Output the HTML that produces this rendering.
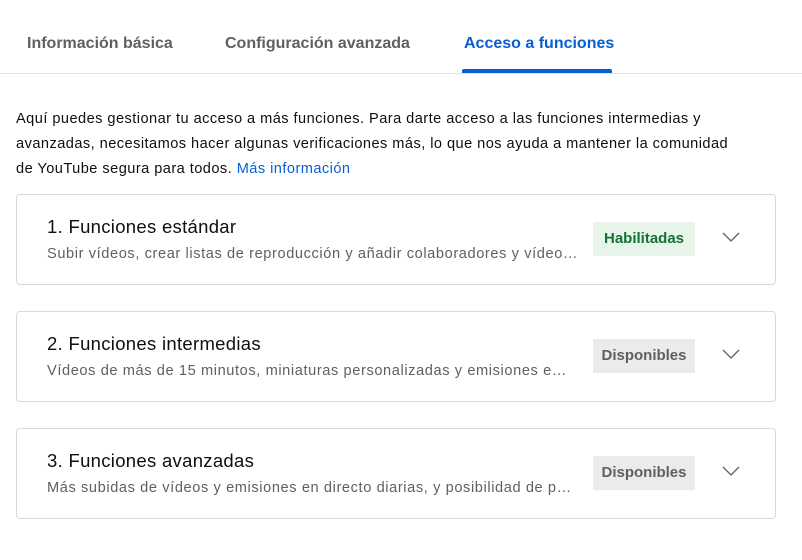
<!DOCTYPE html><html><head><style>
body{margin:0;width:802px;height:560px;background:#fff;font-family:"Liberation Sans",sans-serif;overflow:hidden;position:relative}
.tab{position:absolute;top:35px;font-size:16px;font-weight:bold;color:#606060;white-space:nowrap}
.p{position:absolute;left:16px;top:107px;width:790px;font-size:14.6px;letter-spacing:0.45px;line-height:25px;color:#0f0f0f;white-space:nowrap}
.card{position:absolute;left:16px;width:758px;height:89px;border:1px solid #d9d9d9;border-radius:4px}
.t{position:absolute;left:30px;top:21px;font-size:18.5px;letter-spacing:0.3px;color:#0f0f0f}
.s{position:absolute;left:30px;top:51px;font-size:14.6px;letter-spacing:0.6px;color:#606060;white-space:nowrap}
.b{position:absolute;left:576px;top:27px;width:102px;height:34px;line-height:34px;text-align:center;font-size:15px;font-weight:bold;color:#606060;background:#ebebeb}
.g{background:#e6f4ea;color:#137333}
.c{position:absolute;left:705px;top:36px}
</style></head><body>
<div class="tab" style="left:27px">Información básica</div>
<div class="tab" style="left:225px">Configuración avanzada</div>
<div class="tab" style="left:464px;color:#065fd4">Acceso a funciones</div>
<div style="position:absolute;left:0;top:73px;width:802px;height:1px;background:#e5e5e5"></div>
<div style="position:absolute;left:462px;top:69px;width:150px;height:4px;background:#065fd4;border-radius:2px 2px 0 0"></div>
<div class="p">Aquí puedes gestionar tu acceso a más funciones. Para darte acceso a las funciones intermedias y<br>avanzadas, necesitamos hacer algunas verificaciones más, lo que nos ayuda a mantener la comunidad<br>de YouTube segura para todos. <span style="color:#065fd4">Más información</span></div>
<div class="card" style="top:194px"><div class="t">1. Funciones estándar</div><div class="s">Subir vídeos, crear listas de reproducción y añadir colaboradores y vídeo…</div><div class="b g">Habilitadas</div><svg class="c" width="18" height="12" viewBox="0 0 18 12"><path d="M1 2l8 8 8-8" fill="none" stroke="#606060" stroke-width="1.3"/></svg></div>
<div class="card" style="top:311px"><div class="t">2. Funciones intermedias</div><div class="s">Vídeos de más de 15 minutos, miniaturas personalizadas y emisiones e…</div><div class="b">Disponibles</div><svg class="c" width="18" height="12" viewBox="0 0 18 12"><path d="M1 2l8 8 8-8" fill="none" stroke="#606060" stroke-width="1.3"/></svg></div>
<div class="card" style="top:428px"><div class="t">3. Funciones avanzadas</div><div class="s">Más subidas de vídeos y emisiones en directo diarias, y posibilidad de p…</div><div class="b">Disponibles</div><svg class="c" width="18" height="12" viewBox="0 0 18 12"><path d="M1 2l8 8 8-8" fill="none" stroke="#606060" stroke-width="1.3"/></svg></div>
</body></html>
